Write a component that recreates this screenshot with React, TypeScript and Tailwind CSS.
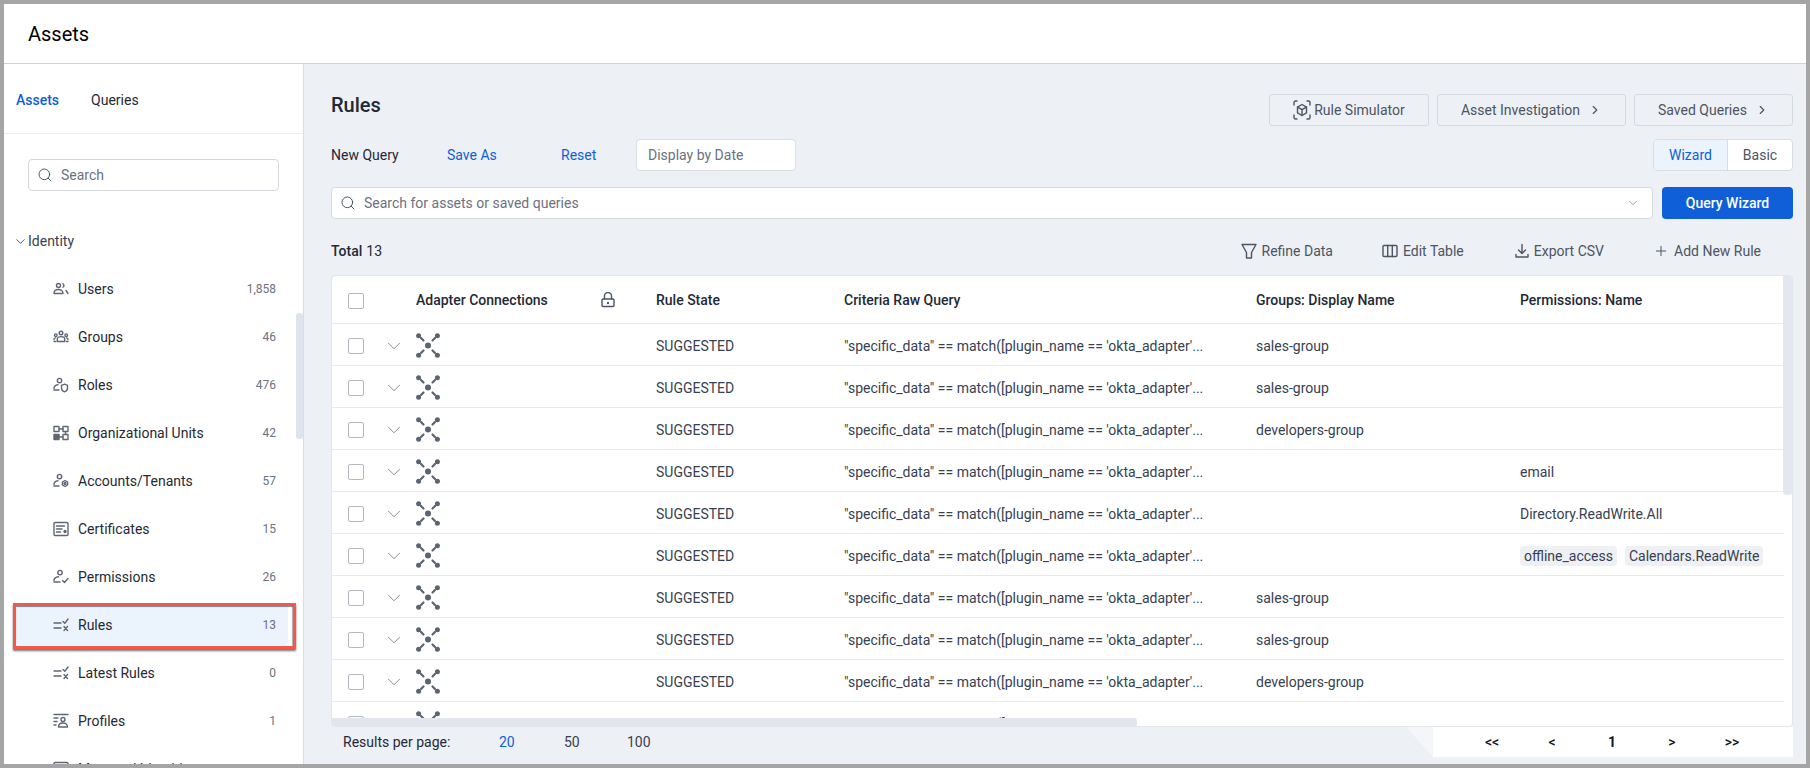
import React from "react";
import { ChevronDown, ChevronRight, Plus, Search } from "lucide-react";

const stroke = {
  fill: "none",
  stroke: "currentColor",
  strokeWidth: 1.4,
  strokeLinecap: "round" as const,
  strokeLinejoin: "round" as const,
};

const UsersIcon = () => (
  <svg width="16" height="16" viewBox="0 0 16 16" {...stroke}>
    <circle cx="5.5" cy="4.5" r="2" />
    <path d="M10 2.800a2 2 0 0 1 0 3.400" />
    <path d="M1 12.500c0-2.800 2-4 4.500-4s4.500 1.200 4.500 4z" />
    <path d="M13 9.500l2 3" />
  </svg>
);

const GroupsIcon = () => (
  <svg width="16" height="16" viewBox="0 0 16 16" {...stroke}>
    <circle cx="8" cy="4" r="1.800" />
    <circle cx="2.800" cy="6.200" r="1.300" />
    <circle cx="13.200" cy="6.200" r="1.300" />
    <path d="M4.300 12.500V10c0-1.400 1.600-2.400 3.700-2.400s3.700 1 3.700 2.400v2.500z" />
    <path d="M1 12.500h1.800M1 10.500c0-.8.500-1.400 1.500-1.600M15 10.500c0-.8-.5-1.400-1.500-1.600M13.200 12.500H15" />
  </svg>
);

const RolesIcon = () => (
  <svg width="16" height="16" viewBox="0 0 16 16" {...stroke}>
    <circle cx="6.500" cy="3.600" r="2.200" />
    <path d="M1 11.500c0-2.200 1.600-3.500 4-3.800M1 13h5" />
    <path d="M8.500 8.300l3-1.100 3 1.100v3c0 1.900-1.300 3-3 3.500-1.700-.5-3-1.600-3-3.500z" />
  </svg>
);

const UnitsIcon = () => (
  <svg width="16" height="16" viewBox="0 0 16 16" {...stroke}>
    <rect x="1" y="1.500" width="5" height="5" />
    <rect x="10" y="1.500" width="5" height="5" />
    <rect x="1" y="9.500" width="5" height="5" fill="currentColor" />
    <rect x="10" y="9.500" width="5" height="5" />
    <path d="M6 4h4M6 12h4M12.500 6.500v3" />
  </svg>
);

const AccountsIcon = () => (
  <svg width="16" height="16" viewBox="0 0 16 16" {...stroke}>
    <circle cx="6.500" cy="3.600" r="2.200" />
    <path d="M1 11.500c0-2.200 1.600-3.500 4-3.800M1 13h5" />
    <circle cx="12" cy="10.500" r="1" />
    <path d="M12 7.500l2.600 1.500v3L12 13.500 9.400 12V9z" />
  </svg>
);

const CertificatesIcon = () => (
  <svg width="16" height="16" viewBox="0 0 16 16" {...stroke}>
    <rect x="1" y="1.500" width="14" height="13" rx="1.200" />
    <path d="M3.500 5h8M3.500 8h5.500M3.500 11h4" />
    <circle cx="12" cy="10.500" r="1" fill="currentColor" />
  </svg>
);

const PermissionsIcon = () => (
  <svg width="16" height="16" viewBox="0 0 16 16" {...stroke}>
    <circle cx="7" cy="3.600" r="2.200" />
    <path d="M1 11.500c0-2.200 1.600-3.500 4.500-3.800M1 13h6" />
    <path d="M9.500 11.500l2 2 3.500-4" />
  </svg>
);

const RulesIcon = () => (
  <svg width="16" height="16" viewBox="0 0 16 16" {...stroke}>
    <path d="M1 6h7M1 11h7" />
    <path d="M10 4.500l1.800 1.800L15 2" />
    <path d="M11 9.500l3.500 4M14.500 9.500L11 13.500" />
  </svg>
);

const ProfilesIcon = () => (
  <svg width="16" height="16" viewBox="0 0 16 16" {...stroke}>
    <path d="M1 1.500h14M1 5h4M1 8.500h3M1 12h2" />
    <circle cx="10" cy="6.500" r="2" />
    <path d="M5.500 14c0-2.600 2-4 4.500-4s4.500 1.400 4.500 4z" />
  </svg>
);

// corner blob, short arm and a centre dot, with small gaps between them
const AdapterIcon = () => (
  <svg width="24" height="25" viewBox="0 0 24 25" className="text-[#5c6473]" fill="currentColor">
    {[[2.600, 2.800, 1], [21.400, 2.800, -1], [2.600, 22.200, -1], [21.400, 22.200, 1]].map(([x, y, s]) => (
      <circle key={`${x}-${y}`} cx={x} cy={y} r="2.500" data-s={s} />
    ))}
    <g stroke="currentColor" strokeWidth="2.200" strokeLinecap="round">
      <path d="M5 5l2.500 2.500M19 5l-2.500 2.500M5 20l2.500-2.500M19 20l-2.500-2.500" />
    </g>
    <circle cx="12" cy="12.500" r="3" />
  </svg>
);

const LockIcon = () => (
  <svg width="14" height="16" viewBox="0 0 14 16" {...stroke} className="text-[#4b5563]">
    <rect x="1" y="7" width="12" height="7.500" rx="1" />
    <path d="M3.500 7V4a3.500 3.500 0 0 1 7 0v3" />
    <circle cx="7" cy="11" r=".5" fill="currentColor" />
  </svg>
);

const SimulatorIcon = () => (
  <svg width="18" height="20" viewBox="0 0 18 20" {...stroke} className="text-[#4b5563]">
    <path d="M1 5V2.500C1 1.700 1.700 1 2.500 1H4M14 1h1.500c.8 0 1.500.7 1.500 1.500V5M17 15v2.500c0 .8-.7 1.500-1.500 1.500H14M4 19H2.500C1.700 19 1 18.300 1 17.500V15" />
    <path d="M9 4.500l4.500 2.600v5.800L9 15.500l-4.500-2.600V7.100z" />
    <path d="M4.500 7.100L9 9.700l4.500-2.600M9 9.700v5.800" />
  </svg>
);

const FunnelIcon = () => (
  <svg width="16" height="16" viewBox="0 0 16 16" {...stroke} className="text-[#4b5563]">
    <path d="M1 1.500h14L10.500 9.500v5.500h-5V9.500z" />
  </svg>
);

const ColumnsIcon = () => (
  <svg width="16" height="14" viewBox="0 0 16 14" {...stroke} className="text-[#4b5563]">
    <rect x="1" y="1.500" width="14" height="11" rx="1" />
    <path d="M5.700 1.500v11M10.300 1.500v11" />
  </svg>
);

const DownloadIcon = () => (
  <svg width="14" height="16" viewBox="0 0 14 16" {...stroke} className="text-[#4b5563]">
    <path d="M7 1.500v8.500M3.500 7L7 10.500 10.500 7M1 11.500v2.500h12v-2.500" />
  </svg>
);

const sideItems: { label: string; count: string; icon: React.ReactNode; active?: boolean }[] = [
  { label: "Users", count: "1,858", icon: <UsersIcon /> },
  { label: "Groups", count: "46", icon: <GroupsIcon /> },
  { label: "Roles", count: "476", icon: <RolesIcon /> },
  { label: "Organizational Units", count: "42", icon: <UnitsIcon /> },
  { label: "Accounts/Tenants", count: "57", icon: <AccountsIcon /> },
  { label: "Certificates", count: "15", icon: <CertificatesIcon /> },
  { label: "Permissions", count: "26", icon: <PermissionsIcon /> },
  { label: "Rules", count: "13", icon: <RulesIcon />, active: true },
  { label: "Latest Rules", count: "0", icon: <RulesIcon /> },
  { label: "Profiles", count: "1", icon: <ProfilesIcon /> },
  { label: "Managed Identities", count: "", icon: <CertificatesIcon /> },
];

const query = `"specific_data" == match([plugin_name == 'okta_adapter'...`;

const rows: { group?: string; perm?: string; chips?: string[] }[] = [
  { group: "sales-group" },
  { group: "sales-group" },
  { group: "developers-group" },
  { perm: "email" },
  { perm: "Directory.ReadWrite.All" },
  { chips: ["offline_access", "Calendars.ReadWrite"] },
  { group: "sales-group" },
  { group: "sales-group" },
  { group: "developers-group" },
  {},
];

const Checkbox = () => (
  <span className="block w-4 h-4 rounded-[2px] border border-[#b4b8bf] bg-white" />
);

const ToolAction = ({ icon, label, className }: { icon: React.ReactNode; label: string; className: string }) => (
  <div className={`flex items-center text-[#4b5563] ${className}`}>
    {icon}
    <span>{label}</span>
  </div>
);

const OutlineButton = ({ className, children }: { className: string; children: React.ReactNode }) => (
  <button className={`h-8 flex items-center justify-center rounded-[3px] border border-[#d5d9e0] bg-[#edf0f5] text-[#4b5563] ${className}`}>
    {children}
  </button>
);

const Sidebar = () => (
  <aside className="relative w-[300px] shrink-0 border-r border-[#d8dde8] bg-white overflow-hidden">
    <div className="h-[70px] flex items-center pl-3 pt-[2px] gap-8 border-b border-[#ececec]">
      <span className="font-medium text-[#0f5fd9]">Assets</span>
      <span className="text-[#1f2937]">Queries</span>
    </div>
    <div className="mt-[25px] mx-6 h-[32px] flex items-center gap-2 px-2 rounded-[4px] border border-[#d5d8dd] text-[#6b7280]">
      <Search size={16} strokeWidth={1.5} className="text-[#4b5563]" />
      <span>Search</span>
    </div>
    <div className="mt-[38px] h-6 flex items-center pl-[9px] text-[#374151]">
      <ChevronDown size={15} strokeWidth={1.5} className="text-[#4b5563]" />
      <span>Identity</span>
    </div>
    <nav className="mt-4 flex flex-col gap-2">
      {sideItems.map((item) => (
        <div
          key={item.label}
          className={`relative ml-3 w-[272px] h-10 shrink-0 flex items-center pl-[37px] pr-3 gap-[9px] rounded-[4px] text-[#1f2937] ${item.active ? "bg-[#ebf3fd]" : ""}`}
        >
          <span className="text-[#5f6673]">{item.icon}</span>
          <span className="flex-1">{item.label}</span>
          <span className="text-xs text-[#6b7280]">{item.count}</span>
          {item.active && (
            <span className="absolute -left-[3px] -right-2 -top-[2px] -bottom-[4px] border-[3px] border-[#f2594b] shadow-[0_2px_2px_rgba(0,0,0,0.55),inset_0_1px_1px_rgba(0,0,0,0.45),inset_-1px_0_1px_rgba(0,0,0,0.3)]" />
          )}
        </div>
      ))}
    </nav>
    <div className="absolute right-0 top-[249px] w-[7px] h-[126px] rounded-[3px] bg-[#e0e4ee]" />
  </aside>
);

const Table = () => (
  <div className="relative mt-[8px] flex-1 min-h-0 flex flex-col rounded-[4px] border border-[#e1e5ec] bg-white overflow-hidden">
    <div className="flex-1 min-h-0 overflow-hidden mb-2 mr-2">
      <div className="grid grid-cols-[84px_240px_188px_412px_264px_1fr] h-[48px] items-center border-b border-[#e6e9ef] font-medium text-[#1f2937]">
        <div className="pl-4 pt-[2px]"><Checkbox /></div>
        <div className="flex items-center">
          <span className="w-[185px]">Adapter Connections</span>
          <LockIcon />
        </div>
        <div>Rule State</div>
        <div>Criteria Raw Query</div>
        <div>Groups: Display Name</div>
        <div>Permissions: Name</div>
      </div>
      {rows.map((row, i) => (
        <div key={i} className="grid grid-cols-[84px_240px_188px_412px_264px_1fr] h-[42px] pt-[3px] items-center border-b border-[#e6e9ef] text-[#374151]">
          <div className="pl-4 flex items-center">
            <Checkbox />
            <ChevronDown size={22} strokeWidth={0.9} className="ml-[19px] text-[#6b7280]" />
          </div>
          <div className="-mt-[2px]"><AdapterIcon /></div>
          <div>SUGGESTED</div>
          <div>{query}</div>
          <div>{row.group}</div>
          <div className="flex items-center gap-2 whitespace-nowrap">
            {row.perm}
            {row.chips?.map((chip) => (
              <span key={chip} className="h-5 flex items-center px-1 rounded-[4px] bg-[#eef0f4]">{chip}</span>
            ))}
          </div>
        </div>
      ))}
    </div>
    <div className="absolute right-0 -top-px w-[9px] h-[220px] rounded-[3px] bg-[#e4e7f0]" />
    <div className="absolute -left-px -bottom-px w-[806px] h-[9px] rounded-[3px] bg-[#e2e5ee]" />
  </div>
);

const Footer = () => (
  <div className="h-[30px] shrink-0 flex items-center">
    <span className="w-[156px] ml-3 text-[#1f2937]">Results per page:</span>
    <span className="w-[65px] text-[#0f5fd9]">20</span>
    <span className="w-[63px] text-[#374151]">50</span>
    <span className="text-[#374151]">100</span>
    <div className="ml-auto w-[27px] h-full bg-[#f4f6fa] [clip-path:polygon(0_0,100%_0,100%_100%)]" />
    <div className="w-[360px] h-full bg-white flex items-center pl-[29px] text-[#111827]">
      {["<<", "<", "1", ">", ">>"].map((p) => (
        <span key={p} className={`w-[60px] text-center ${p === "1" ? "font-bold" : "font-medium"}`}>{p}</span>
      ))}
    </div>
  </div>
);

const App = () => {
  return (
    <div className="w-[1810px] h-[768px] p-1 bg-[#a5a5a5] overflow-hidden text-sm [font-family:Roboto,'Liberation_Sans',sans-serif]">
      <div className="h-full flex flex-col bg-white">
        <header className="h-[60px] shrink-0 flex items-center pl-6 border-b border-[#c9d2e3] text-xl text-black">
          Assets
        </header>
        <div className="flex-1 min-h-0 flex">
          <Sidebar />
          <main className="flex-1 min-w-0 flex flex-col pt-[30px] pl-[27px] pr-[13px] pb-[7px] bg-[#edf0f5]">
            <div className="h-8 shrink-0 flex items-center">
              <h1 className="pb-[10px] text-xl font-medium text-[#1f2937]">Rules</h1>
              <div className="ml-auto flex gap-2">
                <OutlineButton className="w-[160px] gap-[3px]"><SimulatorIcon />Rule Simulator</OutlineButton>
                <OutlineButton className="w-[189px] gap-2">Asset Investigation<ChevronRight size={14} /></OutlineButton>
                <OutlineButton className="w-[159px] gap-2">Saved Queries<ChevronRight size={14} /></OutlineButton>
              </div>
            </div>
            <div className="mt-[13px] h-8 shrink-0 flex items-center">
              <span className="w-[116px] text-[#1f2937]">New Query</span>
              <span className="w-[114px] text-[#0f5fd9]">Save As</span>
              <span className="w-[75px] text-[#0f5fd9]">Reset</span>
              <div className="w-[160px] h-8 flex items-center px-[11px] rounded-[4px] border border-[#d9dce2] bg-white text-[#6b7280]">Display by Date</div>
              <div className="ml-auto w-[140px] h-8 flex rounded-[4px] border border-[#d9dce2] overflow-hidden bg-white">
                <span className="w-[74px] flex items-center justify-center bg-[#ebf3fd] text-[#0f5fd9] border-r border-[#d9dce2]">Wizard</span>
                <span className="flex-1 flex items-center justify-center text-[#4b5563]">Basic</span>
              </div>
            </div>
            <div className="mt-4 h-8 shrink-0 flex gap-[9px]">
              <div className="flex-1 flex items-center gap-2 pl-2 pr-3 rounded-[4px] border border-[#d5d8dd] bg-white text-[#6b7280]">
                <Search size={16} strokeWidth={1.5} className="text-[#4b5563]" />
                <span className="flex-1">Search for assets or saved queries</span>
                <ChevronDown size={14} strokeWidth={1.2} />
              </div>
              <button className="w-[131px] rounded-[4px] bg-[#0f5fd9] font-medium text-white">Query Wizard</button>
            </div>
            <div className="mt-4 h-8 shrink-0 flex items-center text-[#1f2937]">
              <span className="font-medium">Total</span>
              <span className="ml-1">13</span>
              <div className="ml-auto pr-8 flex items-center">
                <ToolAction icon={<FunnelIcon />} label="Refine Data" className="gap-[5px]" />
                <ToolAction icon={<ColumnsIcon />} label="Edit Table" className="gap-[5px] ml-[49px]" />
                <ToolAction icon={<DownloadIcon />} label="Export CSV" className="gap-[5px] ml-[51px]" />
                <ToolAction icon={<Plus size={16} strokeWidth={1.5} />} label="Add New Rule" className="gap-[5px] ml-[49px]" />
              </div>
            </div>
            <Table />
            <Footer />
          </main>
        </div>
      </div>
    </div>
  );
};

export default App;
